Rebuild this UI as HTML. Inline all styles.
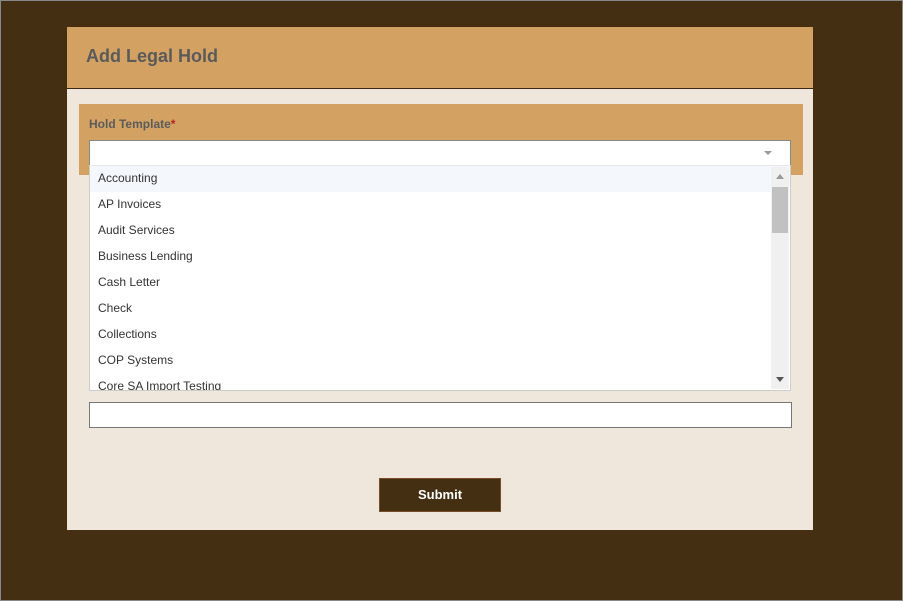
<!DOCTYPE html>
<html><head><style>
*{margin:0;padding:0;box-sizing:border-box}
body{width:903px;height:601px;background:#452f13;position:relative;overflow:hidden;font-family:"Liberation Sans",sans-serif}
.frame{left:0;top:0;width:903px;height:601px;border:1px solid #888;pointer-events:none}
.abs{position:absolute}
.panel{left:67px;top:27px;width:746px;height:503px;background:#efe6dc}
.hdr{left:67px;top:27px;width:746px;height:62px;background:#d3a263;border-bottom:1px solid #3a2a15}
.hdr span{position:absolute;left:19px;top:19px;font-size:18px;font-weight:bold;color:#5a5a5a}
.sec{left:79px;top:104px;width:724px;height:71px;background:#d3a263}
.lbl{left:89px;top:117px;font-size:12px;font-weight:bold;color:#5b5b5b}
.sel{left:89px;top:140px;width:702px;height:26px;background:#fff;border:1px solid #888}
.dd{left:89px;top:165px;width:702px;height:226px;background:#fff;border:1px solid #ccc;border-top:1px solid #e6e6e6;overflow:hidden}
.it{height:26px;line-height:24px;padding-left:8px;font-size:12px;color:#333}
.sb{right:1px;top:1px;width:18px;height:222px;background:#f0f0f0}
.in{left:89px;top:402px;width:703px;height:26px;background:#fff;border:1px solid #777}
.btn{left:379px;top:478px;width:122px;height:34px;background:#452f13;border:1px solid #7a4d2a;color:#fff;font-size:13px;font-weight:bold;text-align:center;line-height:31px}
</style></head><body>
<div class="abs panel"></div>
<div class="abs hdr"><span>Add Legal Hold</span></div>
<div class="abs sec"></div>
<div class="abs lbl">Hold Template<span style="color:#b22">*</span></div>
<div class="abs sel"><div class="abs" style="right:18px;top:10px;border-left:4px solid transparent;border-right:4px solid transparent;border-top:4px solid #999"></div></div>
<div class="abs in"></div>
<div class="abs dd">
<div class="it" style="background:#f4f8fc">Accounting</div>
<div class="it">AP Invoices</div>
<div class="it">Audit Services</div>
<div class="it">Business Lending</div>
<div class="it">Cash Letter</div>
<div class="it">Check</div>
<div class="it">Collections</div>
<div class="it">COP Systems</div>
<div class="it">Core SA Import Testing</div>
<div class="abs sb">
<div class="abs" style="left:5px;top:7px;border-left:4px solid transparent;border-right:4px solid transparent;border-bottom:5px solid #999"></div>
<div class="abs" style="left:1px;top:20px;width:16px;height:46px;background:#c1c1c1"></div>
<div class="abs" style="left:5px;top:210px;border-left:4px solid transparent;border-right:4px solid transparent;border-top:5px solid #555"></div>
</div>
</div>
<div class="abs btn">Submit</div>
<div class="abs frame"></div>
</body></html>
